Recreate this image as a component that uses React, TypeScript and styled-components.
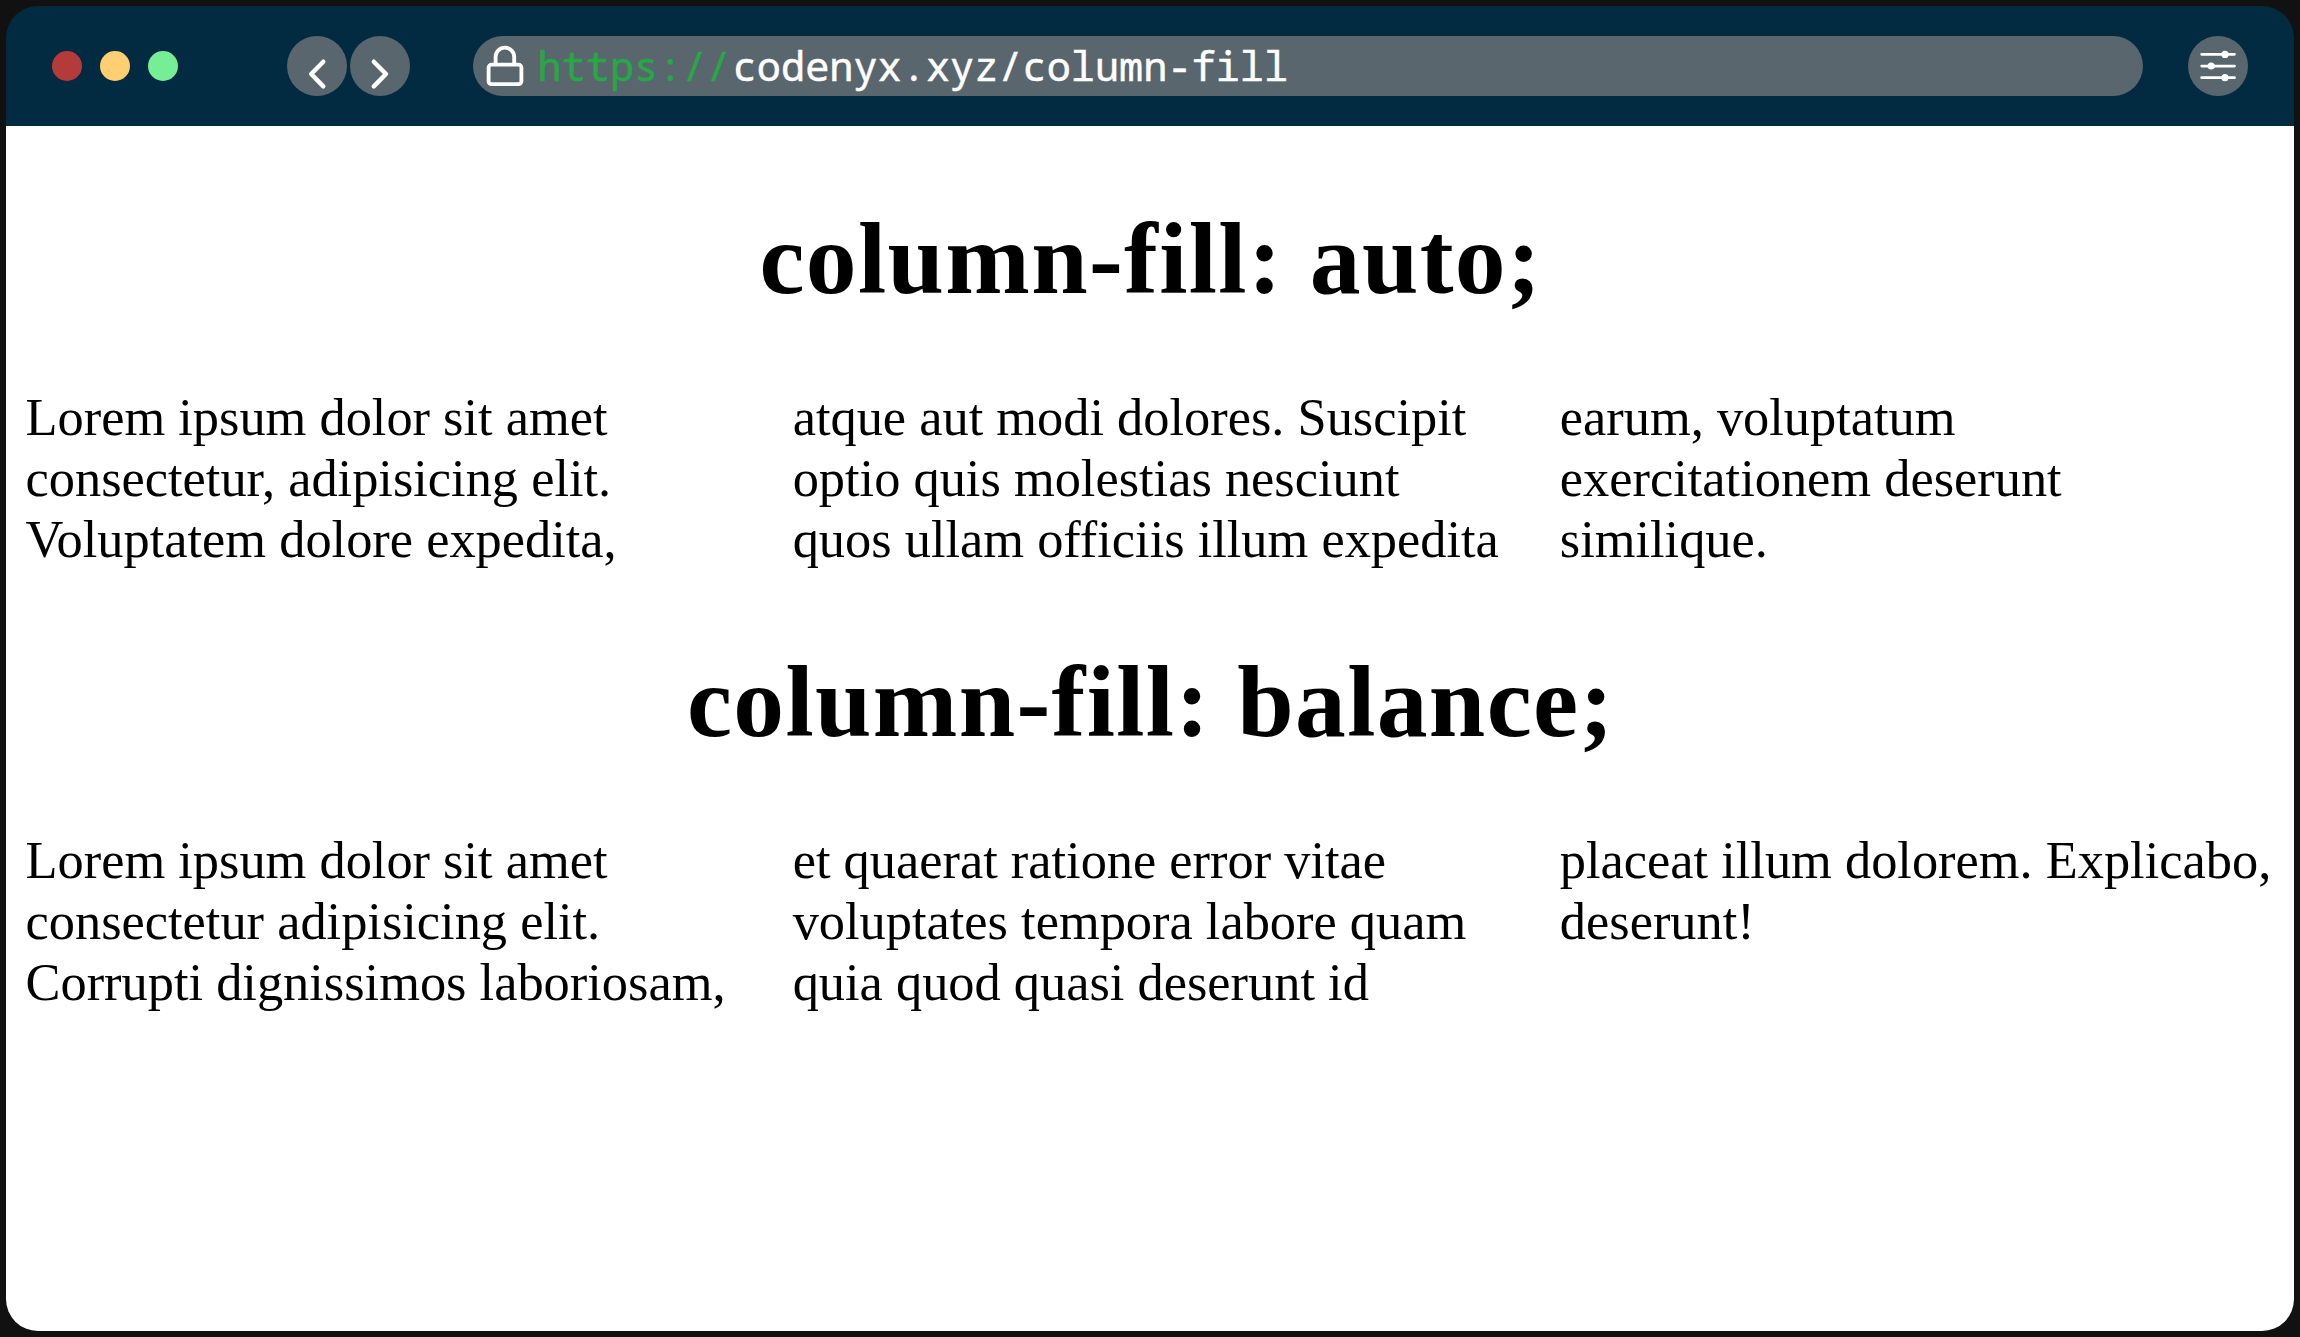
import React from "react";
import styled, { createGlobalStyle } from "styled-components";

const GlobalStyle = createGlobalStyle`
  *, *::before, *::after { box-sizing: border-box; }
  body { margin: 0; background: #111; }
`;

const Desktop = styled.div`
  display: flex;
  width: 100%;
  height: 100vh;
  padding: 6px;
  background: #111;
`;

const Window = styled.main`
  display: flex;
  flex: 1;
  flex-direction: column;
`;

const TitleBar = styled.header`
  display: flex;
  flex: none;
  align-items: center;
  height: 120px;
  padding: 0 46px;
  border-radius: 32px 32px 0 0;
  background: #022b41;
`;

const Lights = styled.div`
  display: flex;
  gap: 18px;
`;

const Light = styled.span<{ $color: string }>`
  width: 30px;
  height: 30px;
  border-radius: 50%;
  background: ${(p) => p.$color};
`;

const Navigation = styled.nav`
  display: flex;
  gap: 3px;
  margin-left: 109px;
`;

const RoundButton = styled.button`
  display: block;
  flex: none;
  width: 60px;
  height: 60px;
  padding: 0;
  border: 0;
  border-radius: 50%;
  background: #59666e;

  svg {
    display: block;
  }
`;

const AddressBar = styled.div`
  display: flex;
  flex: 1;
  align-items: center;
  height: 60px;
  margin: 0 45px 0 63px;
  padding-left: 12px;
  border-radius: 30px;
  background: #59666e;
`;

const Url = styled.span`
  margin-left: 9.5px;
  color: #fff;
  font-family: "Noto Sans Mono", "Liberation Mono", monospace;
  font-size: 40.25px;
  line-height: 60px;
  white-space: pre;
  -webkit-text-stroke: 0.5px currentColor;
`;

const Scheme = styled.span`
  margin-right: 2px;
  color: #28a745;
`;

const Page = styled.section`
  display: flow-root;
  flex: 1;
  padding: 0 20px 0 19.5px;
  border-radius: 0 0 32px 32px;
  background: #fff;
  color: #000;
  font-family: "Liberation Serif", "Times New Roman", serif;
`;

const Heading = styled.h1`
  margin: 72.5px 0 68.5px;
  padding-left: 2px;
  font-size: 101.5px;
  letter-spacing: 1.35px;
  line-height: 120px;
  text-align: center;
`;

const Columns = styled.div<{ $fill: "auto" | "balance" }>`
  height: ${(p) => (p.$fill === "auto" ? "182.4px" : "auto")};
  column-count: 3;
  column-gap: 53px;
  column-fill: ${(p) => p.$fill};
  font-size: 52.4px;
  line-height: 60.8px;
  orphans: 1;
  widows: 1;
`;

const Chevron = ({ d }: { d: string }) => (
  <svg width="60" height="60" fill="none" stroke="#fff" strokeWidth="4.4" strokeLinecap="round" strokeLinejoin="round">
    <path d={d} />
  </svg>
);

const LockIcon = () => (
  <svg width="43" height="60" fill="none" stroke="#fff" strokeWidth="3.8">
    <rect x="3.6" y="28.6" width="32.8" height="19.6" rx="3" />
    <path d="M10.6 28V21a9.3 9.3 0 0 1 18.6 0V28" />
  </svg>
);

const SlidersIcon = () => (
  <svg width="60" height="60" fill="#fff" stroke="#fff" strokeWidth="2.8" strokeLinecap="round">
    <path d="M13.7 18.3H46.5M13.7 30.1H46.5M13.7 41.7H46.5" />
    <g stroke="none">
      <circle cx="37" cy="18.4" r="3.6" />
      <circle cx="23.2" cy="30" r="3.6" />
      <circle cx="37" cy="41.7" r="3.6" />
    </g>
  </svg>
);

export default function App() {
  return (
    <>
      <GlobalStyle />
      <Desktop>
        <Window>
          <TitleBar>
            <Lights>
              <Light $color="#b43b3a" />
              <Light $color="#ffcf72" />
              <Light $color="#76ee95" />
            </Lights>
            <Navigation>
              <RoundButton aria-label="Back">
                <Chevron d="M36.3 25.7L24.2 38L36.3 50.4" />
              </RoundButton>
              <RoundButton aria-label="Forward">
                <Chevron d="M23.8 25.7L36 38L23.8 50.4" />
              </RoundButton>
            </Navigation>
            <AddressBar>
              <LockIcon />
              <Url>
                <Scheme>https://</Scheme>codenyx.xyz/column-fill
              </Url>
            </AddressBar>
            <RoundButton aria-label="Settings">
              <SlidersIcon />
            </RoundButton>
          </TitleBar>
          <Page>
            <Heading>column-fill: auto;</Heading>
            <Columns $fill="auto">
              Lorem ipsum dolor sit amet consectetur, adipisicing elit. Voluptatem dolore expedita, atque
              aut modi dolores. Suscipit optio quis molestias nesciunt quos ullam officiis illum expedita
              earum, voluptatum exercitationem deserunt similique.
            </Columns>
            <Heading>column-fill: balance;</Heading>
            <Columns $fill="balance">
              Lorem ipsum dolor sit amet consectetur adipisicing elit. Corrupti dignissimos laboriosam, et
              quaerat ratione error vitae voluptates tempora labore quam quia quod quasi deserunt id
              placeat illum dolorem. Explicabo, deserunt!
            </Columns>
          </Page>
        </Window>
      </Desktop>
    </>
  );
}
